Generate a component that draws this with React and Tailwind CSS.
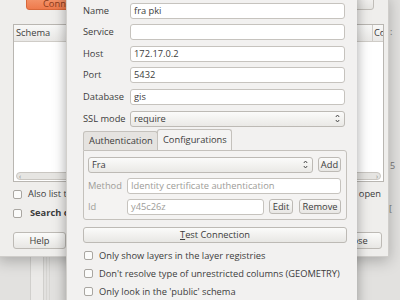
import React from "react";

const font = { fontFamily: '"Open Sans", "Noto Sans", sans-serif' };

const Arrows = () => (
  <svg width="5" height="9" viewBox="0 0 5 9" className="shrink-0">
    <path d="M0.8 3 L2.5 1 L4.2 3" fill="none" stroke="#4a4a4a" strokeWidth="1" />
    <path d="M0.8 6 L2.5 8 L4.2 6" fill="none" stroke="#4a4a4a" strokeWidth="1" />
  </svg>
);

const Check = ({ className = "" }) => (
  <div className={`w-[9px] h-[9px] shrink-0 rounded-[2px] border border-[#a9a6a1] bg-[#fbfbfa] ${className}`} />
);

const Btn = ({ children, className = "" }) => (
  <div
    className={`flex items-center justify-center rounded-[3px] border border-[#bdbab5] bg-gradient-to-b from-[#fbfbfa] to-[#e8e7e4] text-[#3c3c3c] ${className}`}
  >
    {children}
  </div>
);

const Field = ({ children, className = "", muted = false }) => (
  <div
    className={`flex items-center h-[16px] rounded-[3px] border border-[#c6c3be] bg-white px-[3px] whitespace-nowrap overflow-hidden ${
      muted ? "text-[#9d9c98]" : "text-[#3c3c3c]"
    } ${className}`}
  >
    {children}
  </div>
);

// ventana de fondo (conexiones), casi toda tapada por el diálogo
const BackWindow = () => (
  <div className="absolute left-[-2px] top-[-6px] w-[391px] h-[263px] bg-[#efeeec] border border-[#cfcdca] shadow-[0_4px_14px_rgba(0,0,0,0.25)] flex flex-col pl-[14px] pr-[6px] text-[#3c3c3c]">
    <div className="flex justify-between h-[15px]">
      <div className="ml-[13px] w-[110px] h-[15px] rounded-b-[3px] border border-[#d9683a] bg-gradient-to-b from-[#f59b72] to-[#ee7a4c] text-[#8a3a1a] flex items-end pl-[16px] leading-[11px]">
        Connect
      </div>
      <div className="w-[60px] h-[15px] mr-[8px] rounded-b-[3px] border border-[#c0bdb8] bg-gradient-to-b from-[#f6f5f4] to-[#e6e5e2]" />
    </div>
    <div className="mt-[14px] w-[371px] h-[158px] border border-[#b9b6b1] bg-white flex flex-col">
      <div className="flex h-[17px] border-b border-[#cfccc7] bg-gradient-to-b from-[#f8f8f7] to-[#e9e8e6]">
        <div className="flex-1 pl-[2px] flex items-center">Schema</div>
        <div className="w-[11px] border-l border-[#cfccc7] flex items-center pl-[1px] overflow-hidden">Co</div>
      </div>
      <div className="flex-1" />
      <div className="h-[8px] mx-[2px] mb-[1px] rounded-full border border-[#c9c6c1] bg-[#e6e5e2] flex items-center justify-between px-[2px] text-[7px] leading-none text-[#8a8884]">
        <span>‹</span>
        <span>›</span>
      </div>
    </div>
    <div className="mt-[7px] flex items-center justify-between h-[10px]">
      <div className="w-[53px] flex items-center gap-[6px] overflow-hidden whitespace-nowrap">
        <Check />
        <span>Also list tables with no geometry</span>
      </div>
      <div className="w-[25px] flex justify-end overflow-hidden whitespace-nowrap mr-[1px]">
        <span className="shrink-0">Keep dialog open</span>
      </div>
    </div>
    <div className="mt-[9px] w-[53px] flex items-center gap-[8px] h-[10px] overflow-hidden whitespace-nowrap">
      <Check />
      <span className="font-bold">Search options</span>
    </div>
    <div className="mt-[14px] flex justify-between">
      <Btn className="w-[53px] h-[17px]">Help</Btn>
      <Btn className="w-[52px] h-[17px]">Close</Btn>
    </div>
  </div>
);

const Dialog = () => (
  <div className="absolute left-[66px] top-[-10px] w-[291px] h-[320px] bg-[#f2f1f0] border-l border-[#d2d0cc] shadow-[0_0_12px_rgba(0,0,0,0.35)] pl-[16px] pr-[12px] pt-[12.7px] text-[#3c3c3c]">
    <div className="grid grid-cols-[47px_1fr] gap-y-[5.6px] items-center">
      <span>Name</span>
      <Field>fra pki</Field>
      <span>Service</span>
      <Field />
      <span>Host</span>
      <Field>172.17.0.2</Field>
      <span>Port</span>
      <Field>5432</Field>
      <span>Database</span>
      <Field>gis</Field>
      <span>SSL mode</span>
      <div className="flex items-center justify-between h-[16px] rounded-[3px] border border-[#bdbab5] bg-gradient-to-b from-[#fbfbfa] to-[#eae9e6] pl-[3px] pr-[4px]">
        <span>require</span>
        <Arrows />
      </div>
    </div>

    <div className="mt-[2.3px] w-[264px]">
      <div className="flex items-end h-[21px]">
        <div className="w-[75px] h-[19px] flex items-center pl-[5px] border border-b-0 border-[#c4c1bc] rounded-t-[3px] bg-[#e5e3e0]">
          Authentication
        </div>
        <div className="w-[75px] h-[21px] flex items-center pl-[5px] border border-b-0 border-[#c4c1bc] rounded-t-[3px] bg-[#f4f3f2] -ml-px">
          Configurations
        </div>
      </div>
      <div className="h-[70px] border border-[#c4c1bc] rounded-b-[3px] rounded-tr-[3px] bg-[#f4f3f2] pl-[4px] pr-[5px] pt-[6px] flex flex-col gap-[5px]">
        <div className="flex items-center gap-[5px] h-[16px]">
          <div className="flex-1 flex items-center justify-between h-[16px] rounded-[3px] border border-[#bdbab5] bg-gradient-to-b from-[#fbfbfa] to-[#eae9e6] pl-[3px] pr-[4px]">
            <span>Fra</span>
            <Arrows />
          </div>
          <Btn className="w-[23px] h-[15px]">Add</Btn>
        </div>
        <div className="flex items-center h-[16px]">
          <span className="w-[39px] shrink-0 text-[#9d9c98]">Method</span>
          <Field muted className="flex-1">Identity certificate authentication</Field>
        </div>
        <div className="flex items-center h-[16px]">
          <span className="w-[39px] shrink-0 text-[#9d9c98]">Id</span>
          <Field muted className="w-[137px]">y45c26z</Field>
          <Btn className="ml-[5px] w-[24px] h-[15px]">Edit</Btn>
          <Btn className="ml-[6px] w-[42px] h-[15px]">Remove</Btn>
        </div>
      </div>
    </div>

    <Btn className="mt-[7px] w-[264px] h-[16px]">
      <span>
        <span className="underline">T</span>est Connection
      </span>
    </Btn>

    <div className="mt-[4px] flex flex-col">
      {[
        "Only show layers in the layer registries",
        "Don't resolve type of unrestricted columns (GEOMETRY)",
        "Only look in the 'public' schema",
      ].map((t) => (
        <div key={t} className="flex items-center h-[18px] gap-[6px] pl-[1px]">
          <Check />
          <span>{t}</span>
        </div>
      ))}
    </div>
  </div>
);

export default function App() {
  return (
    <div
      className="relative w-[400px] h-[300px] overflow-hidden bg-[#e2e1df] text-[9.3px] leading-[12px]"
      style={font}
    >
      {/* restos de otra ventana detrás */}
      <div className="absolute left-[30px] top-[250px] w-[14px] h-[60px] border-x border-[#d0cfcc] bg-[#ebeae8]" />
      <div className="absolute left-[46px] top-[250px] w-[4px] h-[60px] border-x border-[#d6d5d2]" />
      <div className="absolute left-[390px] top-[26px] text-[#777] text-[9px]">:</div>
      <div className="absolute left-[390px] top-[160px] text-[#777] text-[9px]">5</div>
      <div className="absolute left-[389px] top-[203px] text-[#777] text-[9px]">[</div>
      <BackWindow />
      <Dialog />
    </div>
  );
}
